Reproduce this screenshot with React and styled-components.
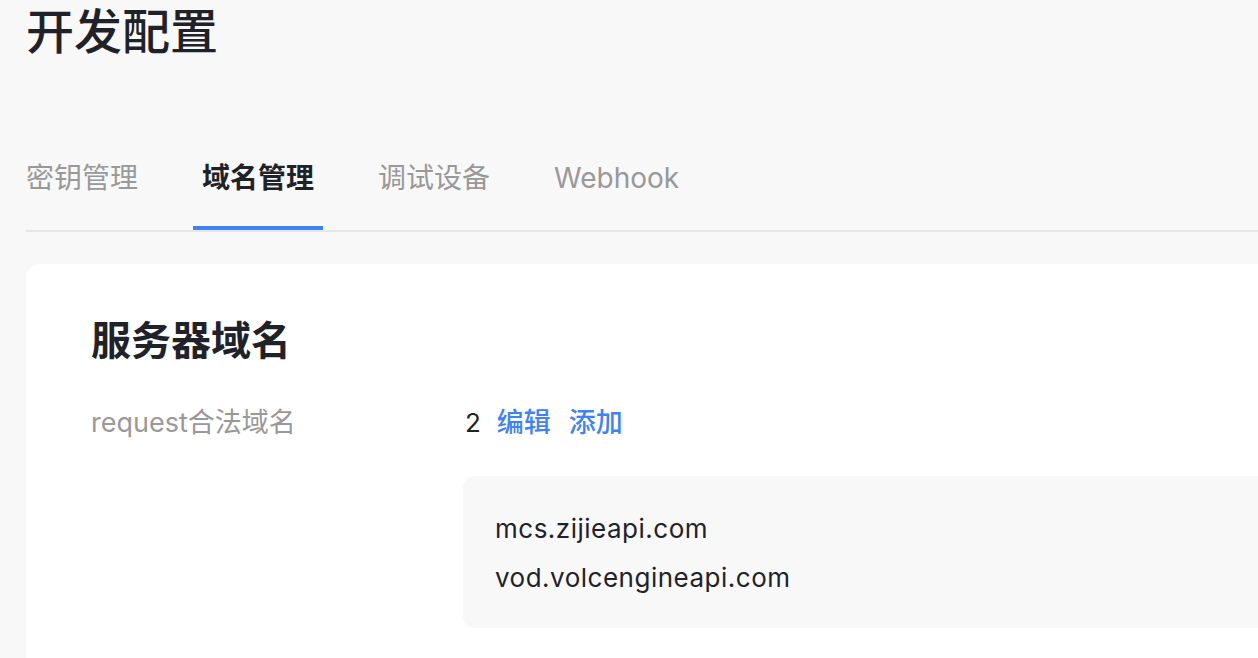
import React from 'react';
import styled, { createGlobalStyle } from 'styled-components';

const GlobalStyle = createGlobalStyle`
  html, body {
    margin: 0;
    padding: 0;
    background: #f8f8f8;
    overflow: hidden;
  }
  body {
    font-family: Inter, "Noto Sans CJK SC", sans-serif;
    color: #1f2329;
  }
`;

const Page = styled.div`
  width: 1300px;
  min-height: 658px;
  padding-left: 26px;
  box-sizing: border-box;
`;

const Title = styled.h1`
  margin: 0;
  font-size: 48px;
  line-height: 64px;
  font-weight: 500;
  color: #1f2329;
`;

// tab bar
const TabBar = styled.div`
  margin-top: 94px;
  border-bottom: 2px solid #e6e6e6;
`;

const TabList = styled.div`
  display: flex;
  gap: 46px;
  margin-left: -9px;
`;

const Tab = styled.div`
  position: relative;
  padding: 0 9px 32px;
  font-size: 28px;
  line-height: 40px;
  font-weight: ${p => (p.$active ? 600 : 400)};
  color: ${p => (p.$active ? '#1f2329' : '#999999')};

  &::after {
    content: "";
    position: absolute;
    left: 0;
    right: 0;
    bottom: 0;
    height: 4px;
    background: ${p => (p.$active ? '#3e83f6' : 'transparent')};
  }
`;

const Card = styled.section`
  margin-top: 32px;
  min-height: 420px;
  background: #ffffff;
  border-radius: 14px;
  padding: 49px 0 0 65px;
`;

const CardTitle = styled.h2`
  margin: 0;
  font-size: 40px;
  line-height: 56px;
  font-weight: 600;
`;

const Row = styled.div`
  display: grid;
  grid-template-columns: 372px 1fr;
  margin-top: 34px;
`;

const Label = styled.div`
  font-size: 27px;
  line-height: 40px;
  color: #999999;
`;

const Actions = styled.div`
  display: flex;
  align-items: center;
  gap: 18px;
  padding-left: 2px;
  font-size: 26px;
  line-height: 40px;
`;

const Count = styled.span`
  color: #1f2329;
  margin-right: -2px;
`;

const Link = styled.span`
  color: #3e83f6;
  font-weight: 500;
  font-size: 27px;
`;

const DomainBox = styled.div`
  grid-column: 2;
  margin-top: 33px;
  background: #f8f8f8;
  border-radius: 12px;
  padding: 28px 32px 26px;
`;

const Domain = styled.div`
  font-size: 26px;
  line-height: 49px;
  letter-spacing: 0.5px;
  color: #1f2329;
`;

const tabs = ['密钥管理', '域名管理', '调试设备', 'Webhook'];
const domains = ['mcs.zijieapi.com', 'vod.volcengineapi.com'];

export default function App() {
  return (
    <Page>
      <GlobalStyle />
      <Title>开发配置</Title>
      <TabBar>
        <TabList>
          {tabs.map(t => (
            <Tab key={t} $active={t === '域名管理'}>{t}</Tab>
          ))}
        </TabList>
      </TabBar>
      <Card>
        <CardTitle>服务器域名</CardTitle>
        <Row>
          <Label>request合法域名</Label>
          <Actions>
            <Count>2</Count>
            <Link>编辑</Link>
            <Link>添加</Link>
          </Actions>
          <DomainBox>
            {domains.map(d => (
              <Domain key={d}>{d}</Domain>
            ))}
          </DomainBox>
        </Row>
      </Card>
    </Page>
  );
}
